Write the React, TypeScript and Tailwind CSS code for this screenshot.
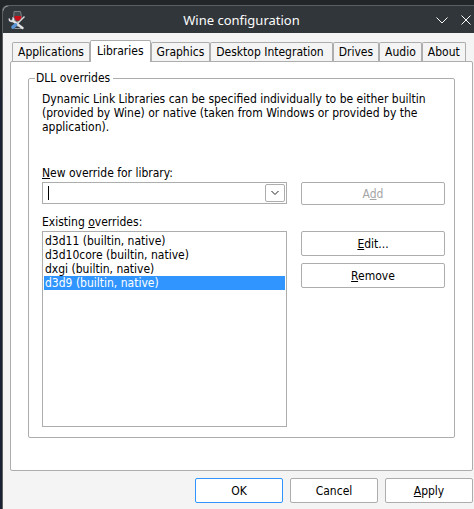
import { useState, type ReactNode } from "react";

const tabs = [
  { name: "Applications", pad: "px-[5px]" },
  { name: "Libraries", pad: "px-[6px]" },
  { name: "Graphics", pad: "px-[5px]" },
  { name: "Desktop Integration", pad: "pr-[8px] pl-[5px]" },
  { name: "Drives", pad: "px-[5px]" },
  { name: "Audio", pad: "px-[5px]" },
  { name: "About", pad: "px-[5px]" },
];
const overrides = ["d3d11", "d3d10core", "dxgi", "d3d9"];

function Key({ children }: { children: ReactNode }) {
  return <span className="underline decoration-1 underline-offset-1 [text-decoration-skip-ink:none]">{children}</span>;
}

function Button({ children, disabled, primary, className = "" }: { children: ReactNode; disabled?: boolean; primary?: boolean; className?: string }) {
  return (
    <button
      type="button"
      disabled={disabled}
      className={`flex items-center justify-center rounded-xs border bg-white ${primary ? "border-[#3095ff]" : "border-[#adadad]"} ${disabled ? "text-[#a5a5a5]" : "text-black"} ${className}`}
    >
      <span>{children}</span>
    </button>
  );
}

function WineIcon() {
  return (
    <svg viewBox="0 0 18 20" className="h-5 w-[18px]" fill="none" aria-hidden="true">
      <path d="M6 1.500h6.500l1.200 6c.2 2.500-1.500 4-3.900 4s-4.300-1.500-4.100-4z" fill="#454a4f" stroke="#7d8286" />
      <path d="M6.500 6h6.800c.3 3-1 4.800-3.400 4.800S6.200 9 6.500 6z" fill="#c8101a" />
      <path d="M10 11v6M6.500 18.500h7" stroke="#92979b" strokeWidth="1.200" />
      <path d="M4.500 10.500l10 7.500" stroke="#e0e2e4" strokeWidth="2.400" strokeLinecap="round" />
      <path d="M1.200 8.500c0 2.600 2.200 3.600 4 2.500M4.500 7.500c1 .8 1.400 2 1 3" stroke="#e0e2e4" strokeWidth="1.600" />
      <path d="M16.500 6.500l-8 8" stroke="#d5d8da" strokeWidth="1.500" />
      <path d="M7.500 15l-2.500 2.200" stroke="#5b95d6" strokeWidth="3.600" strokeLinecap="round" />
    </svg>
  );
}

export default function App() {
  const [selected, setSelected] = useState("d3d9");
  return (
    <div className="min-h-screen bg-linear-to-b from-[#232629] from-15% to-[#1a2233] to-20% pt-[5px] pl-[2px] font-['DejaVu_Sans_Condensed','DejaVu_Sans',sans-serif] text-[12px] leading-[14px] text-black [font-stretch:condensed]">
      <div className="flex min-h-[504px] flex-col rounded-tl-md border-t border-l border-[#5c6063] bg-[#f4f4f4]">
        <header className="flex h-[27px] items-center rounded-tl-md bg-[#31363b] pr-[3px] pl-[5px] text-[#fcfcfc]">
          <WineIcon />
          <h1 className="flex-1 pl-[21px] text-center font-['Noto_Sans',sans-serif] text-[13px] leading-[18px] [font-stretch:normal]">Wine configuration</h1>
          <button type="button" aria-label="Minimize" className="mr-[13px]">
            <svg viewBox="0 0 12 12" className="size-3" fill="none" stroke="currentColor"><path d="M.5 3.500L6 9l5.500-5.500" /></svg>
          </button>
          <button type="button" aria-label="Close">
            <svg viewBox="0 0 10 10" className="size-2.5" fill="none" stroke="currentColor"><path d="M.5.500l9 9m0-9l-9 9" /></svg>
          </button>
        </header>

        <main className="flex flex-col pt-[7px] pr-px pl-[7px]">
          <div role="tablist" className="flex items-end pl-[2px]">
            {tabs.map(({ name, pad }) => (
              <button
                key={name}
                type="button"
                role="tab"
                aria-selected={name === "Libraries"}
                className={`rounded-t-xs border border-b-0 border-[#adadad] whitespace-nowrap ${pad} ${name === "Libraries" ? "z-10 -mb-px h-[22px] bg-white pb-px" : "h-[19px] bg-[#f4f4f4]"}`}
              >
                {name}
              </button>
            ))}
          </div>

          <section className="rounded-xs border border-[#adadad] bg-white px-[17px] pt-[9px] pb-[32px]">
            <fieldset className="rounded-xs border border-[#adadad] pr-[9px] pb-[10px] pl-[13px]">
              <legend className="-ml-[7px] pr-[3px] pl-px">DLL overrides</legend>
              <p className="h-[81px] pt-[7px]">
                Dynamic Link Libraries can be specified individually to be either builtin (provided by Wine) or native (taken from Windows or provided by the application).
              </p>
              <div className="flex gap-[14px]">
                <div className="min-w-0 flex-1">
                  <label htmlFor="library" className="block h-[16px]"><Key>N</Key>ew override for library:</label>
                  <div className="flex h-[22px] items-center border border-[#adadad] bg-white p-px">
                    <span className="ml-1 h-[14px] w-px bg-black" aria-hidden="true" />
                    <input id="library" className="min-w-0 flex-1 outline-none" />
                    <button type="button" aria-label="Show libraries" className="flex h-[18px] w-5 items-center justify-center rounded-xs border border-[#adadad]">
                      <svg viewBox="0 0 8 8" className="size-2" fill="none" stroke="#222"><path d="M.5 2L4 5.500 7.500 2" /></svg>
                    </button>
                  </div>
                  <div className="mt-[11px] h-[16px]" id="existing">Existing <Key>o</Key>verrides:</div>
                  <ul role="listbox" aria-labelledby="existing" className="h-[196px] border border-[#adadad] px-px py-[2px]">
                    {overrides.map((name) => (
                      <li
                        key={name}
                        role="option"
                        aria-selected={name === selected}
                        onClick={() => setSelected(name)}
                        className={`pl-px ${name === selected ? "bg-[#3095ff] text-white" : ""}`}
                      >
                        {name} (builtin, native)
                      </li>
                    ))}
                  </ul>
                </div>
                <div className="flex w-[144px] flex-col pt-[16px]">
                  <Button disabled className="h-[23px]">A<Key>d</Key>d</Button>
                  <Button className="mt-[26px] h-[25px]"><Key>E</Key>dit...</Button>
                  <Button className="mt-[7px] h-[25px]"><Key>R</Key>emove</Button>
                </div>
              </div>
            </fieldset>
          </section>

          <footer className="flex justify-end gap-[7px] pt-[7px] pb-[6px]">
            <Button primary className="h-[25px] w-[88px]">OK</Button>
            <Button className="h-[25px] w-[88px]">Cancel</Button>
            <Button className="h-[25px] w-[88px]"><Key>A</Key>pply</Button>
          </footer>
        </main>
      </div>
    </div>
  );
}
